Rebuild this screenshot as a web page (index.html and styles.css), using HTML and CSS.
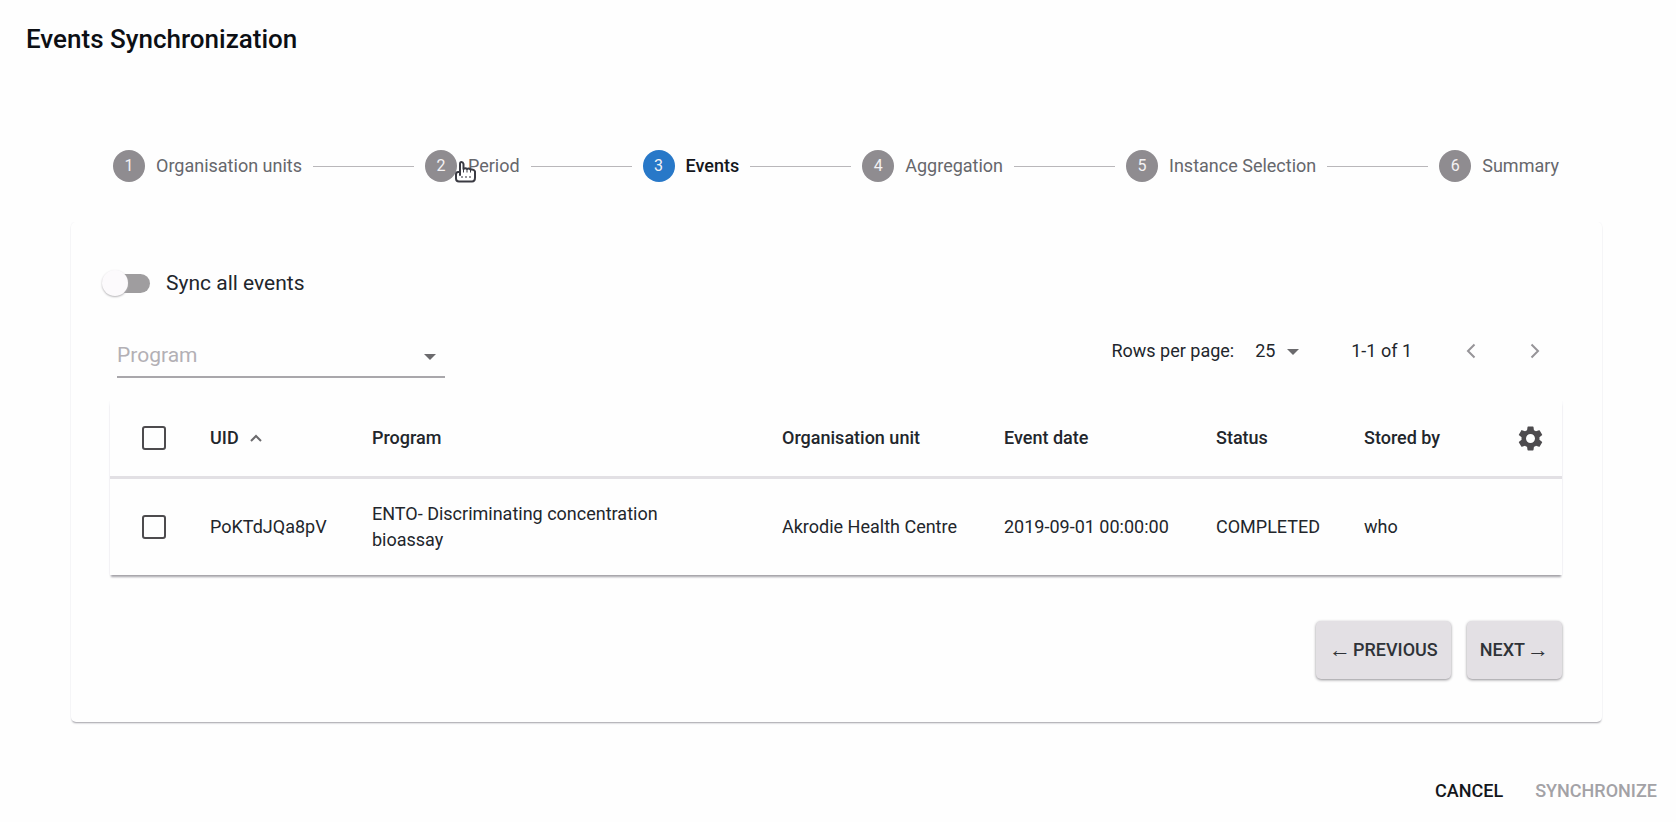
FILE: index.html
```html
<!DOCTYPE html>
<html lang="en">
<head>
<meta charset="utf-8">
<title>Events Synchronization</title>
<meta name="viewport" content="width=device-width, initial-scale=1">
<link rel="stylesheet" href="styles.css">
</head>
<body>
<main class="dialog">
  <h1 class="dialog-title">Events Synchronization</h1>

  <ol class="stepper">
    <li class="step"><span class="step-icon">1</span><span>Organisation units</span></li>
    <li class="connector" aria-hidden="true"></li>
    <li class="step"><span class="step-icon">2</span><span>Period</span>
      <svg class="pointer" viewBox="0 0 24 24" aria-hidden="true">
        <path d="M6 12V4q0-2 1.500-2T9.500 4v5q2-1.500 3.500 0q2-1 3.500 .5q3.500-.5 4.500 2v6q0 4-3 4H5q-3 0-3-3v-4q0-2.500 2-2.500h2v3" fill="#fff" stroke="#3a3a42" stroke-width="2" stroke-linejoin="round" stroke-linecap="round"/>
        <path d="M9.500 9v3.500M13 9.500v3M16.500 10v2.500" stroke="#3a3a42" stroke-width="1"/>
        <path d="M7 17h2M11 17h2M15 17h2" stroke="#77777d" stroke-width="1.500"/>
      </svg>
    </li>
    <li class="connector" aria-hidden="true"></li>
    <li class="step step-active" aria-current="step"><span class="step-icon">3</span><span>Events</span></li>
    <li class="connector" aria-hidden="true"></li>
    <li class="step"><span class="step-icon">4</span><span>Aggregation</span></li>
    <li class="connector" aria-hidden="true"></li>
    <li class="step"><span class="step-icon">5</span><span>Instance Selection</span></li>
    <li class="connector" aria-hidden="true"></li>
    <li class="step"><span class="step-icon">6</span><span>Summary</span></li>
  </ol>

  <section class="card">
    <label class="switch-row">
      <input class="switch" type="checkbox" role="switch">
      <span>Sync all events</span>
    </label>

    <div class="toolbar">
      <div class="program-field">
        <select class="program-select" aria-label="Program"><option>Program</option></select>
        <svg class="caret" viewBox="0 0 12 6" aria-hidden="true"><path d="M0 0h12L6 6z"/></svg>
      </div>
      <div class="pagination">
        <label for="rows">Rows per page:</label>
        <div class="rows-field">
          <select class="rows-select" id="rows"><option>25</option></select>
          <svg class="caret" viewBox="0 0 12 6" aria-hidden="true"><path d="M0 0h12L6 6z"/></svg>
        </div>
        <span class="range">1-1 of 1</span>
        <button class="page-button" type="button" aria-label="Previous page" disabled>
          <svg viewBox="0 0 10 16" aria-hidden="true"><path d="M8.500 1.500L2 8l6.500 6.500"/></svg>
        </button>
        <button class="page-button" type="button" aria-label="Next page" disabled>
          <svg viewBox="0 0 10 16" aria-hidden="true"><path d="M1.500 1.500L8 8l-6.500 6.500"/></svg>
        </button>
      </div>
    </div>

    <table class="events">
      <colgroup>
        <col class="col-check"><col class="col-uid"><col class="col-program"><col class="col-unit"><col class="col-date"><col class="col-status"><col class="col-stored"><col class="col-settings">
      </colgroup>
      <thead>
        <tr>
          <th class="check-cell"><input class="checkbox" type="checkbox" aria-label="Select all"></th>
          <th aria-sort="ascending"><span class="sort">UID <svg viewBox="0 0 12 8" aria-hidden="true"><path d="M1 7l5-5 5 5"/></svg></span></th>
          <th>Program</th>
          <th>Organisation unit</th>
          <th>Event date</th>
          <th>Status</th>
          <th>Stored by</th>
          <th>
            <button class="settings" type="button" aria-label="Table settings">
              <svg viewBox="2 2 20 20" aria-hidden="true"><path d="M19.140 12.940c.04-.3.06-.61.06-.94s-.02-.64-.07-.94l2.030-1.580c.18-.14.23-.41.12-.61l-1.920-3.320c-.12-.22-.37-.29-.59-.22l-2.390.96c-.5-.38-1.030-.7-1.620-.94l-.36-2.540c-.04-.24-.24-.41-.48-.41h-3.840c-.24 0-.43.17-.47.41l-.36 2.540c-.59.24-1.130.57-1.620.94l-2.390-.96c-.22-.08-.47 0-.59.22L2.740 8.870c-.12.21-.08.47.12.61l2.030 1.580c-.05.3-.09.63-.09.94s.02.64.07.94l-2.030 1.580c-.18.14-.23.41-.12.61l1.920 3.320c.12.22.37.29.59.22l2.390-.96c.5.38 1.030.7 1.620.94l.36 2.540c.05.24.24.41.48.41h3.840c.24 0 .44-.17.47-.41l.36-2.540c.59-.24 1.130-.56 1.620-.94l2.390.96c.22.08.47 0 .59-.22l1.920-3.320c.12-.22.07-.47-.12-.61l-2.010-1.580zM12 15.600c-1.980 0-3.600-1.620-3.600-3.600s1.620-3.600 3.600-3.600 3.600 1.620 3.600 3.600-1.620 3.600-3.600 3.600z"/></svg>
            </button>
          </th>
        </tr>
      </thead>
      <tbody>
        <tr>
          <td class="check-cell"><input class="checkbox" type="checkbox" aria-label="Select PoKTdJQa8pV"></td>
          <td>PoKTdJQa8pV</td>
          <td class="program-cell">ENTO- Discriminating concentration bioassay</td>
          <td>Akrodie Health Centre</td>
          <td>2019-09-01 00:00:00</td>
          <td>COMPLETED</td>
          <td>who</td>
          <td></td>
        </tr>
      </tbody>
    </table>

    <div class="wizard-actions">
      <button class="raised" type="button"><span class="arrow">←</span> PREVIOUS</button>
      <button class="raised" type="button">NEXT <span class="arrow">→</span></button>
    </div>
  </section>

  <footer class="dialog-actions">
    <button class="flat" type="button">CANCEL</button>
    <button class="flat" type="button" disabled>SYNCHRONIZE</button>
  </footer>
</main>
</body>
</html>
```
FILE: styles.css
```css
* {
  box-sizing: border-box;
}

body {
  margin: 0;
  background: #fefefe;
  color: #22262c;
  font-family: Roboto, "Liberation Sans", sans-serif;
  font-size: 18px;
  line-height: 26px;
}

button,
select {
  margin: 0;
  padding: 0;
  border: 0;
  background: none;
  color: inherit;
  font: inherit;
}

.dialog-title {
  margin: 0;
  padding: 20px 26px;
  color: #0c0f14;
  font-size: 26px;
  font-weight: 500;
  line-height: 38px;
}

/* Stepper */

.stepper {
  display: flex;
  align-items: center;
  gap: 11px;
  margin: 72px 117px 40px 113px;
  padding: 0;
  list-style: none;
}

.step {
  position: relative;
  display: flex;
  align-items: center;
  gap: 11px;
  color: #66676c;
  white-space: nowrap;
}

.step-icon {
  display: grid;
  place-items: center;
  width: 32px;
  height: 32px;
  border-radius: 50%;
  background: #8f8c90;
  color: #f4f2f4;
  font-size: 16px;
}

.step-active {
  color: #14171c;
  font-weight: 500;
}

.step-active .step-icon {
  background: #2878c8;
  font-weight: 400;
}

.connector {
  flex: 1;
  height: 1px;
  background: #b9b7ba;
}

.pointer {
  position: absolute;
  top: 10px;
  left: 29px;
  width: 24px;
  height: 24px;
}

/* Card */

.card {
  margin: 0 74px 0 71px;
  padding: 42px 40px 43px 39px;
  border-radius: 5px;
  background: #fefefe;
  box-shadow: 0 2px 2px -1px #a09fa6, 0 0 2px #f0f0f4;
  clip-path: inset(0 -4px -4px -4px);
}

.switch-row {
  display: inline-flex;
  align-items: center;
  gap: 16px;
  height: 38px;
  font-size: 21px;
}

.switch {
  appearance: none;
  position: relative;
  width: 40px;
  height: 19px;
  margin: 0;
  border-radius: 10px;
  background: #9f9d9f;
}

.switch::before {
  content: "";
  position: absolute;
  top: -4px;
  left: -8px;
  width: 26px;
  height: 26px;
  border-radius: 50%;
  background: #fcfafc;
  box-shadow: 0 1px 2px #b5b3b6;
}

.toolbar {
  display: flex;
  align-items: flex-start;
  justify-content: space-between;
  padding: 27px 20px 23px 7px;
}

.program-field,
.rows-field {
  position: relative;
}

.program-select,
.rows-select {
  appearance: none;
  display: block;
}

.program-select {
  width: 328px;
  height: 49px;
  padding-top: 4px;
  border-bottom: 2px solid #a9a7ab;
  color: #b3b0b5;
  font-size: 21px;
}

.caret {
  position: absolute;
  right: 9px;
  top: 25px;
  width: 12px;
  height: 6px;
  fill: #6b6a6d;
  pointer-events: none;
}

.pagination {
  display: flex;
  align-items: center;
  height: 44px;
}

.rows-select {
  width: 44px;
  height: 26px;
}

.rows-field {
  margin: 0 52px 0 21px;
}

.rows-field .caret {
  top: 11px;
  right: 0;
}

.page-button {
  display: grid;
  place-items: center;
  width: 14px;
  height: 32px;
  margin-left: 52px;
}

.page-button + .page-button {
  margin-left: 50px;
}

.page-button svg {
  width: 10px;
  height: 16px;
  fill: none;
  stroke: #969498;
  stroke-width: 2;
}

/* Events table */

.events {
  width: 100%;
  table-layout: fixed;
  border-collapse: collapse;
  box-shadow: 0 3px 2px -1px #a3a1a7, 0 0 2px #f0f0f4;
  clip-path: inset(0 -4px -4px -4px);
}

.col-check { width: 100px; }
.col-uid { width: 162px; }
.col-unit { width: 222px; }
.col-date { width: 212px; }
.col-status { width: 148px; }
.col-stored { width: 154px; }
.col-settings { width: 44px; }

.events th,
.events td {
  padding: 0;
  text-align: left;
  vertical-align: middle;
}

.events th {
  height: 76px;
  border-bottom: 3px solid #e2e0e4;
  font-weight: 500;
}

.events td {
  height: 98px;
}

.events .check-cell {
  padding-left: 32px;
}

.events .program-cell {
  padding-right: 75px;
}

.checkbox {
  appearance: none;
  display: block;
  width: 24px;
  height: 24px;
  margin: 0;
  border: 2px solid #4d4b4e;
  border-radius: 3px;
}

.sort {
  display: flex;
  align-items: center;
  gap: 11px;
}

.sort svg {
  width: 12px;
  height: 8px;
  fill: none;
  stroke: #6b6a6d;
  stroke-width: 2;
}

.settings {
  display: block;
}

.settings svg {
  display: block;
  width: 25px;
  height: 25px;
  fill: #4d4b4e;
}

/* Buttons */

.wizard-actions {
  display: flex;
  justify-content: flex-end;
  gap: 16px;
  padding-top: 46px;
}

.raised {
  display: flex;
  align-items: center;
  gap: 2px;
  height: 58px;
  padding: 0 13px;
  border-radius: 5px;
  background: #e3e0e4;
  color: #2f3338;
  font-weight: 500;
  box-shadow: 0 1px 3px #8f8d92;
}

.arrow {
  font-family: "Liberation Sans", sans-serif;
  font-size: 22px;
  font-weight: 400;
}

.dialog-actions {
  display: flex;
  justify-content: flex-end;
  gap: 32px;
  padding: 56px 19px 19px;
}

.flat {
  color: #14171c;
  font-weight: 500;
}

.flat:disabled {
  color: #a3a2a6;
}
```
